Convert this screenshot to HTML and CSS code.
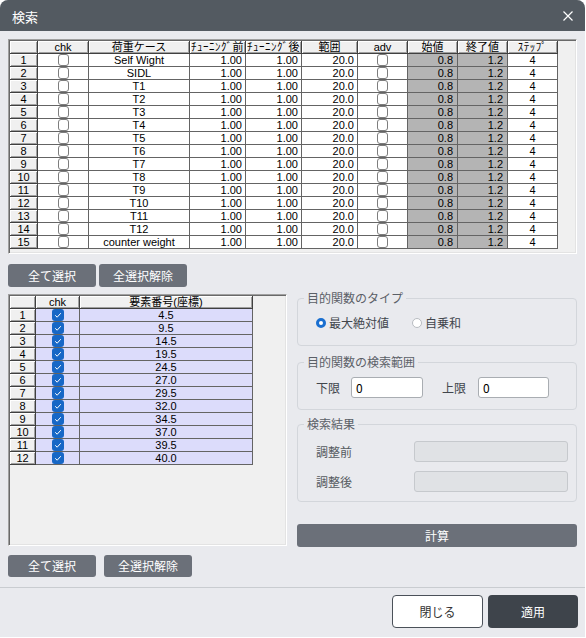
FILE: index.html
```html
<!DOCTYPE html>
<html lang="ja">
<head>
<meta charset="utf-8">
<title>検索</title>
<link rel="stylesheet" href="styles.css">
</head>
<body>
<div class="dialog">
  <div class="titlebar">
    <span class="title">検索</span>
    <svg class="close" width="10" height="10" viewBox="0 0 10 10"><path d="M0.5 0.5L9.5 9.5M9.5 0.5L0.5 9.5" stroke="#fff" stroke-width="1.2" fill="none"/></svg>
  </div>
  <div class="body">
    <div class="sheet sheet-main">
      <div class="grid grid-main">
        <div class="cell hd"></div><div class="cell hd">chk</div><div class="cell hd">荷重ケース</div><div class="cell hd hw">ﾁｭｰﾆﾝｸﾞ前</div><div class="cell hd hw">ﾁｭｰﾆﾝｸﾞ後</div><div class="cell hd">範囲</div><div class="cell hd">adv</div><div class="cell hd">始値</div><div class="cell hd">終了値</div><div class="cell hd hw">ｽﾃｯﾌﾟ</div>

        <div class="cell hd">1</div><div class="cell c"><span class="cb"></span></div><div class="cell c">Self Wight</div><div class="cell r">1.00</div><div class="cell r">1.00</div><div class="cell r">20.0</div><div class="cell c"><span class="cb"></span></div><div class="cell r g">0.8</div><div class="cell r g">1.2</div><div class="cell c">4</div>
        <div class="cell hd">2</div><div class="cell c"><span class="cb"></span></div><div class="cell c">SIDL</div><div class="cell r">1.00</div><div class="cell r">1.00</div><div class="cell r">20.0</div><div class="cell c"><span class="cb"></span></div><div class="cell r g">0.8</div><div class="cell r g">1.2</div><div class="cell c">4</div>
        <div class="cell hd">3</div><div class="cell c"><span class="cb"></span></div><div class="cell c">T1</div><div class="cell r">1.00</div><div class="cell r">1.00</div><div class="cell r">20.0</div><div class="cell c"><span class="cb"></span></div><div class="cell r g">0.8</div><div class="cell r g">1.2</div><div class="cell c">4</div>
        <div class="cell hd">4</div><div class="cell c"><span class="cb"></span></div><div class="cell c">T2</div><div class="cell r">1.00</div><div class="cell r">1.00</div><div class="cell r">20.0</div><div class="cell c"><span class="cb"></span></div><div class="cell r g">0.8</div><div class="cell r g">1.2</div><div class="cell c">4</div>
        <div class="cell hd">5</div><div class="cell c"><span class="cb"></span></div><div class="cell c">T3</div><div class="cell r">1.00</div><div class="cell r">1.00</div><div class="cell r">20.0</div><div class="cell c"><span class="cb"></span></div><div class="cell r g">0.8</div><div class="cell r g">1.2</div><div class="cell c">4</div>
        <div class="cell hd">6</div><div class="cell c"><span class="cb"></span></div><div class="cell c">T4</div><div class="cell r">1.00</div><div class="cell r">1.00</div><div class="cell r">20.0</div><div class="cell c"><span class="cb"></span></div><div class="cell r g">0.8</div><div class="cell r g">1.2</div><div class="cell c">4</div>
        <div class="cell hd">7</div><div class="cell c"><span class="cb"></span></div><div class="cell c">T5</div><div class="cell r">1.00</div><div class="cell r">1.00</div><div class="cell r">20.0</div><div class="cell c"><span class="cb"></span></div><div class="cell r g">0.8</div><div class="cell r g">1.2</div><div class="cell c">4</div>
        <div class="cell hd">8</div><div class="cell c"><span class="cb"></span></div><div class="cell c">T6</div><div class="cell r">1.00</div><div class="cell r">1.00</div><div class="cell r">20.0</div><div class="cell c"><span class="cb"></span></div><div class="cell r g">0.8</div><div class="cell r g">1.2</div><div class="cell c">4</div>
        <div class="cell hd">9</div><div class="cell c"><span class="cb"></span></div><div class="cell c">T7</div><div class="cell r">1.00</div><div class="cell r">1.00</div><div class="cell r">20.0</div><div class="cell c"><span class="cb"></span></div><div class="cell r g">0.8</div><div class="cell r g">1.2</div><div class="cell c">4</div>
        <div class="cell hd">10</div><div class="cell c"><span class="cb"></span></div><div class="cell c">T8</div><div class="cell r">1.00</div><div class="cell r">1.00</div><div class="cell r">20.0</div><div class="cell c"><span class="cb"></span></div><div class="cell r g">0.8</div><div class="cell r g">1.2</div><div class="cell c">4</div>
        <div class="cell hd">11</div><div class="cell c"><span class="cb"></span></div><div class="cell c">T9</div><div class="cell r">1.00</div><div class="cell r">1.00</div><div class="cell r">20.0</div><div class="cell c"><span class="cb"></span></div><div class="cell r g">0.8</div><div class="cell r g">1.2</div><div class="cell c">4</div>
        <div class="cell hd">12</div><div class="cell c"><span class="cb"></span></div><div class="cell c">T10</div><div class="cell r">1.00</div><div class="cell r">1.00</div><div class="cell r">20.0</div><div class="cell c"><span class="cb"></span></div><div class="cell r g">0.8</div><div class="cell r g">1.2</div><div class="cell c">4</div>
        <div class="cell hd">13</div><div class="cell c"><span class="cb"></span></div><div class="cell c">T11</div><div class="cell r">1.00</div><div class="cell r">1.00</div><div class="cell r">20.0</div><div class="cell c"><span class="cb"></span></div><div class="cell r g">0.8</div><div class="cell r g">1.2</div><div class="cell c">4</div>
        <div class="cell hd">14</div><div class="cell c"><span class="cb"></span></div><div class="cell c">T12</div><div class="cell r">1.00</div><div class="cell r">1.00</div><div class="cell r">20.0</div><div class="cell c"><span class="cb"></span></div><div class="cell r g">0.8</div><div class="cell r g">1.2</div><div class="cell c">4</div>
        <div class="cell hd">15</div><div class="cell c"><span class="cb"></span></div><div class="cell c">counter weight</div><div class="cell r">1.00</div><div class="cell r">1.00</div><div class="cell r">20.0</div><div class="cell c"><span class="cb"></span></div><div class="cell r g">0.8</div><div class="cell r g">1.2</div><div class="cell c">4</div>
      </div>
    </div>

    <div class="btnrow btnrow-top">
      <button class="btn">全て選択</button>
      <button class="btn">全選択解除</button>
    </div>

    <div class="columns">
      <div class="left">
        <div class="sheet sheet-elem">
          <div class="grid grid-elem">
            <div class="cell hd"></div><div class="cell hd">chk</div><div class="cell hd">要素番号(座標)</div>
            <div class="cell hd">1</div><div class="cell c lav"><span class="cb on"><svg width="12" height="12" viewBox="0 0 12 12"><path d="M3.2 6.3L5.2 8.2L8.8 4.2" stroke="#fff" stroke-width="1" fill="none"/></svg></span></div><div class="cell c lav">4.5</div>
            <div class="cell hd">2</div><div class="cell c lav"><span class="cb on"><svg width="12" height="12" viewBox="0 0 12 12"><path d="M3.2 6.3L5.2 8.2L8.8 4.2" stroke="#fff" stroke-width="1" fill="none"/></svg></span></div><div class="cell c lav">9.5</div>
            <div class="cell hd">3</div><div class="cell c lav"><span class="cb on"><svg width="12" height="12" viewBox="0 0 12 12"><path d="M3.2 6.3L5.2 8.2L8.8 4.2" stroke="#fff" stroke-width="1" fill="none"/></svg></span></div><div class="cell c lav">14.5</div>
            <div class="cell hd">4</div><div class="cell c lav"><span class="cb on"><svg width="12" height="12" viewBox="0 0 12 12"><path d="M3.2 6.3L5.2 8.2L8.8 4.2" stroke="#fff" stroke-width="1" fill="none"/></svg></span></div><div class="cell c lav">19.5</div>
            <div class="cell hd">5</div><div class="cell c lav"><span class="cb on"><svg width="12" height="12" viewBox="0 0 12 12"><path d="M3.2 6.3L5.2 8.2L8.8 4.2" stroke="#fff" stroke-width="1" fill="none"/></svg></span></div><div class="cell c lav">24.5</div>
            <div class="cell hd">6</div><div class="cell c lav"><span class="cb on"><svg width="12" height="12" viewBox="0 0 12 12"><path d="M3.2 6.3L5.2 8.2L8.8 4.2" stroke="#fff" stroke-width="1" fill="none"/></svg></span></div><div class="cell c lav">27.0</div>
            <div class="cell hd">7</div><div class="cell c lav"><span class="cb on"><svg width="12" height="12" viewBox="0 0 12 12"><path d="M3.2 6.3L5.2 8.2L8.8 4.2" stroke="#fff" stroke-width="1" fill="none"/></svg></span></div><div class="cell c lav">29.5</div>
            <div class="cell hd">8</div><div class="cell c lav"><span class="cb on"><svg width="12" height="12" viewBox="0 0 12 12"><path d="M3.2 6.3L5.2 8.2L8.8 4.2" stroke="#fff" stroke-width="1" fill="none"/></svg></span></div><div class="cell c lav">32.0</div>
            <div class="cell hd">9</div><div class="cell c lav"><span class="cb on"><svg width="12" height="12" viewBox="0 0 12 12"><path d="M3.2 6.3L5.2 8.2L8.8 4.2" stroke="#fff" stroke-width="1" fill="none"/></svg></span></div><div class="cell c lav">34.5</div>
            <div class="cell hd">10</div><div class="cell c lav"><span class="cb on"><svg width="12" height="12" viewBox="0 0 12 12"><path d="M3.2 6.3L5.2 8.2L8.8 4.2" stroke="#fff" stroke-width="1" fill="none"/></svg></span></div><div class="cell c lav">37.0</div>
            <div class="cell hd">11</div><div class="cell c lav"><span class="cb on"><svg width="12" height="12" viewBox="0 0 12 12"><path d="M3.2 6.3L5.2 8.2L8.8 4.2" stroke="#fff" stroke-width="1" fill="none"/></svg></span></div><div class="cell c lav">39.5</div>
            <div class="cell hd">12</div><div class="cell c lav"><span class="cb on"><svg width="12" height="12" viewBox="0 0 12 12"><path d="M3.2 6.3L5.2 8.2L8.8 4.2" stroke="#fff" stroke-width="1" fill="none"/></svg></span></div><div class="cell c lav">40.0</div>
          </div>
        </div>
        <div class="btnrow btnrow-bottom">
          <button class="btn">全て選択</button>
          <button class="btn">全選択解除</button>
        </div>
      </div>

      <div class="right">
        <fieldset class="group g1">
          <legend>目的関数のタイプ</legend>
          <div class="gbody radios">
            <label class="radio"><span class="dot on"></span>最大絶対値</label>
            <label class="radio r2"><span class="dot"></span>自乗和</label>
          </div>
        </fieldset>
        <fieldset class="group g2">
          <legend>目的関数の検索範囲</legend>
          <div class="gbody range">
            <span class="lbl lbl-lo">下限</span><span class="input in-lo">0</span>
            <span class="lbl lbl-hi">上限</span><span class="input in-hi">0</span>
          </div>
        </fieldset>
        <fieldset class="group g3">
          <legend>検索結果</legend>
          <div class="gbody results">
            <div class="res-row"><span class="lbl lbl-res">調整前</span><span class="input dis"></span></div>
            <div class="res-row"><span class="lbl lbl-res">調整後</span><span class="input dis"></span></div>
          </div>
        </fieldset>
        <button class="btn calc">計算</button>
      </div>
    </div>
  </div>
  <div class="footer">
    <button class="fbtn close-btn">閉じる</button>
    <button class="fbtn apply">適用</button>
  </div>
</div>
</body>
</html>
```

FILE: styles.css
```css
html, body {
  margin: 0;
  padding: 0;
}
body {
  background: #ffffff;
  width: 586px;
  height: 638px;
  overflow: hidden;
  font-family: "Noto Sans CJK JP", "Noto Sans", sans-serif;
}
.dialog {
  width: 585px;
  height: 637px;
  background: #e9eaee;
  border-radius: 8px 8px 0 0;
  overflow: hidden;
  box-sizing: border-box;
}
.titlebar {
  height: 31px;
  background: #535a61;
  display: flex;
  align-items: center;
  justify-content: space-between;
  padding: 0 12px 0 12px;
  color: #fff;
}
.title {
  font-size: 13px;
  line-height: 16px;
  padding-top: 2px;
}
.close {
  display: block;
}
.body {
  padding: 8px 8px 0 8px;
}

/* grid sheets */
.sheet {
  box-sizing: border-box;
  border: 1px solid;
  border-color: #a0a0a0 #ffffff #ffffff #a0a0a0;
  padding: 1px;
  box-shadow: inset 1px 1px 0 #696969, inset -1px -1px 0 #e3e3e3;
  background: #f0f0f0;
}
.sheet-main {
  width: 569px;
  height: 215px;
}
.sheet-elem {
  width: 279px;
  height: 252px;
}
.grid {
  display: grid;
  grid-auto-rows: 13px;
  width: max-content;
  font: 11px/12px "Liberation Sans", "Noto Sans CJK JP", sans-serif;
  color: #000;
}
.grid-main {
  grid-template-columns: 28px 51px 101px 56px 56px 56px 50px 50px 50px 50px;
}
.grid-elem {
  grid-template-columns: 26px 44px 173px;
}
.cell {
  box-sizing: border-box;
  border-right: 1px solid #646464;
  border-bottom: 1px solid #646464;
  background: #fff;
  white-space: nowrap;
  overflow: hidden;
  display: flex;
  align-items: center;
  justify-content: center;
}
.cell.hd {
  background: #f0f0f0;
  border-color: #404040;
  box-shadow: inset 1px 1px 0 #fff, inset -1px -1px 0 #a0a0a0;
}
.cell.hw {
  letter-spacing: 0.5px;
}
.cell.r {
  justify-content: flex-end;
  padding-right: 3px;
}
.cell.g {
  background: #b4b4b4;
  padding-right: 4px;
}
.cell.lav {
  background: #dcdcfb;
}
.cb {
  display: inline-block;
  box-sizing: border-box;
  width: 11px;
  height: 12px;
  border: 1px solid #7d7d7d;
  border-radius: 3px;
  background: #fff;
}
.cb.on {
  width: 12px;
  height: 12px;
  border: 0;
  background: #1767c6;
}
.cb.on svg {
  display: block;
}

/* buttons */
.btnrow {
  display: flex;
}
.btnrow-top {
  margin-top: 10px;
  gap: 3px;
}
.btnrow-bottom {
  margin-top: 9px;
  gap: 8px;
}
.btn {
  box-sizing: border-box;
  width: 88px;
  height: 22px;
  border: 0;
  border-radius: 3px;
  background: #6b7079;
  color: #fff;
  font: 12px/14px "Noto Sans CJK JP", sans-serif;
  padding: 0;
}
.btnrow-top .btn {
  height: 23px;
}

.columns {
  display: flex;
  gap: 10px;
  margin-top: 4px;
}
.left {
  width: 279px;
  padding-top: 3px;
}
.right {
  width: 280px;
  display: flex;
  flex-direction: column;
}

/* group boxes */
.group {
  margin: 0;
  padding: 0;
  border: 1px solid #d3d6db;
  border-radius: 4px;
  min-width: 0;
}
.group legend {
  margin-left: 6px;
  padding: 0 3px;
  font-size: 12px;
  line-height: 14px;
  color: #5b6067;
}
.g2 { margin-top: 9px; }
.g3 { margin-top: 7px; }
.gbody {
  padding-left: 18px;
  font-size: 12px;
  color: #41464c;
}
.radios {
  display: flex;
  align-items: center;
  height: 16px;
  padding-top: 10px;
  padding-bottom: 14px;
}
.radio {
  display: flex;
  align-items: center;
  gap: 3px;
  line-height: 16px;
}
.r2 {
  margin-left: 23px;
}
.dot {
  box-sizing: border-box;
  width: 10px;
  height: 10px;
  border-radius: 50%;
  border: 1px solid #b8bcc1;
  background: #fff;
}
.dot.on {
  border: 3px solid #1a6fd0;
}
.range {
  display: flex;
  align-items: center;
  padding-top: 8px;
  padding-bottom: 11px;
}
.lbl {
  line-height: 16px;
}
.lbl-lo {
  width: 35px;
}
.lbl-hi {
  width: 36px;
  margin-left: 19px;
}
.input {
  box-sizing: border-box;
  height: 21px;
  border: 1px solid #a9adb2;
  border-radius: 3px;
  background: #fff;
  color: #000;
  padding-left: 4px;
  font-size: 12px;
  line-height: 19px;
}
.in-lo { width: 72px; }
.in-hi { width: 71px; }
.input.dis {
  width: 154px;
  background: #e0e2e5;
  border-color: #c6c9cd;
}
.results {
  display: flex;
  flex-direction: column;
  gap: 9px;
  padding-top: 10px;
  padding-bottom: 9px;
}
.res-row {
  display: flex;
  align-items: center;
}
.lbl-res {
  width: 98px;
  color: #555a60;
}
.calc {
  width: 280px;
  height: 23px;
  margin-top: 22px;
}

/* footer */
.footer {
  margin-top: 10px;
  border-top: 1px solid #c9ccd0;
  padding: 7px 7px 8px;
  display: flex;
  justify-content: flex-end;
  gap: 5px;
}
.fbtn {
  box-sizing: border-box;
  height: 33px;
  border-radius: 4px;
  font: 12px/14px "Noto Sans CJK JP", sans-serif;
  padding: 0;
}
.close-btn {
  width: 91px;
  background: #fff;
  border: 1px solid #4b5159;
  color: #333;
}
.apply {
  width: 90px;
  background: #3e444b;
  border: 0;
  color: #fff;
}
```
